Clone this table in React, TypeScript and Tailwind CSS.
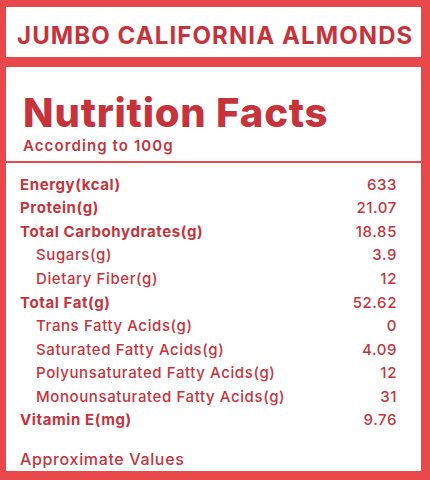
import React from "react";

const rows: { label: string; value: string; bold: boolean }[] = [
  { label: "Energy(kcal)", value: "633", bold: true },
  { label: "Protein(g)", value: "21.07", bold: true },
  { label: "Total Carbohydrates(g)", value: "18.85", bold: true },
  { label: "Sugars(g)", value: "3.9", bold: false },
  { label: "Dietary Fiber(g)", value: "12", bold: false },
  { label: "Total Fat(g)", value: "52.62", bold: true },
  { label: "Trans Fatty Acids(g)", value: "0", bold: false },
  { label: "Saturated Fatty Acids(g)", value: "4.09", bold: false },
  { label: "Polyunsaturated Fatty Acids(g)", value: "12", bold: false },
  { label: "Monounsaturated Fatty Acids(g)", value: "31", bold: false },
  { label: "Vitamin E(mg)", value: "9.76", bold: true },
];

export default function App() {
  return (
    <div
      className="w-[430px] h-[480px] overflow-hidden bg-[#e8484a] pt-[7px] pl-[6px] pr-[9px] text-[#c7333a]"
      style={{ fontFamily: "Inter, 'Noto Sans', sans-serif" }}
    >
      <div className="bg-white h-[50px] flex items-center pl-[11px] pt-[7px]">
        <span className="text-[24px] font-bold tracking-[1.1px] leading-none">JUMBO CALIFORNIA ALMONDS</span>
      </div>
      <div className="mt-[10px] bg-white h-[94px] pl-[17px] pt-[26px]">
        <div className="text-[40px] font-extrabold leading-[40px] tracking-[0.8px]">Nutrition Facts</div>
        <div className="text-[15px] font-semibold leading-[18px] mt-[4px] tracking-[1.1px]">According to 100g</div>
      </div>
      <div className="mt-[2px] bg-white h-[308px] pl-[14px] pr-[24px] pt-[10px] tracking-[0.6px]">
        {rows.map((r) => (
          <div key={r.label} className="h-[23.6px] flex items-center justify-between text-[15px]">
            <span className={r.bold ? "font-bold" : "font-medium pl-[16px]"}>{r.label}</span>
            <span className="font-medium">{r.value}</span>
          </div>
        ))}
        <div className="mt-[16px] text-[16px] font-medium leading-[20px] tracking-[0.65px]">Approximate Values</div>
      </div>
    </div>
  );
}
